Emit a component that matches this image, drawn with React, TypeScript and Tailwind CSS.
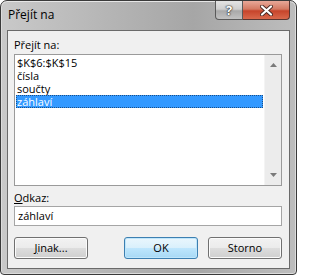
import React from "react";

const font = { fontFamily: "'Open Sans','Noto Sans',sans-serif" };

function Btn({ children, def }: { children: React.ReactNode; def?: boolean }) {
  return (
    <div
      className={
        "w-[74px] h-[22px] rounded-[3px] border flex items-center justify-center text-[11px] text-black " +
        (def
          ? "border-[#3c7fb1] bg-[linear-gradient(#eaf6fd_0%,#d9f0fc_50%,#bee6fd_51%,#a7d9f5_100%)] shadow-[inset_0_0_0_1px_#bfe6fb]"
          : "border-[#707070] bg-[linear-gradient(#f2f2f2_0%,#ebebeb_50%,#dddddd_51%,#cfcfcf_100%)] shadow-[inset_0_0_0_1px_#fbfbfb]")
      }
    >
      {children}
    </div>
  );
}

export default function App() {
  return (
    <div
      style={font}
      className="w-[297px] h-[275px] flex flex-col rounded-t-[7px] rounded-b-[4px] border border-[#3a3a3a] bg-[linear-gradient(90deg,#c9c9c9_0%,#b3b3b3_40%,#a6a6a6_65%,#bdbdbd_100%)] shadow-[inset_0_1px_0_#e6e6e6,inset_1px_0_0_#dcdcdc,inset_-1px_0_0_#dcdcdc,inset_0_-1px_0_#dcdcdc] overflow-hidden"
    >
      <div className="h-[29px] flex items-start justify-between shrink-0">
        <div className="pl-[7px] pt-[6px] text-[12px] leading-[16px] text-black">Přejít na</div>
        <div className="flex mr-[6px]">
          <div className="w-[28px] h-[19px] border border-t-0 border-[#5a5a5a] rounded-bl-[4px] bg-[linear-gradient(#e4e4e4_0%,#cfcfcf_45%,#a9a9a9_55%,#c2c2c2_100%)] flex items-center justify-center text-white font-bold text-[13px] leading-none [text-shadow:0_0_1px_#333,0_0_1px_#333,0_0_2px_#333]">
            ?
          </div>
          <div className="w-[47px] h-[19px] border border-t-0 border-l-0 border-[#5a3530] rounded-br-[4px] bg-[linear-gradient(#e8a898_0%,#d47a63_45%,#c7442b_55%,#d9694c_100%)] flex items-center justify-center">
            <svg width="13" height="11" viewBox="0 0 13 11">
              <path d="M2 1.5 L11 9.5 M11 1.5 L2 9.5" stroke="#4a2a24" strokeWidth="4" strokeLinecap="round" />
              <path d="M2 1.5 L11 9.5 M11 1.5 L2 9.5" stroke="#ffffff" strokeWidth="2.2" strokeLinecap="round" />
            </svg>
          </div>
        </div>
      </div>
      <div className="mx-[6px] mb-[5px] flex-1 border border-[#6a6a6a] bg-[#f0f0f0] flex flex-col pl-[6px] pr-[7px] pt-[6px] text-[11px] text-black">
        <div className="h-[15px] leading-[15px]">Přejít na:</div>
        <div className="mt-[2px] h-[132px] border border-[#9a9a9a] bg-white flex">
          <div className="flex-1 p-[1px] flex flex-col">
            <div className="h-[13px] leading-[13px] pl-[1px]">$K$6:$K$15</div>
            <div className="h-[13px] leading-[13px] pl-[1px]">čísla</div>
            <div className="h-[13px] leading-[13px] pl-[1px]">součty</div>
            <div className="h-[13px] leading-[11px] pl-[0px] bg-[#3399ff] text-white border border-dotted border-[#1c4f86]">záhlaví</div>
          </div>
          <div className="w-[17px] bg-[#ececec] border-l border-[#f4f4f4] flex flex-col items-center justify-between py-[8px]">
            <svg width="7" height="4" viewBox="0 0 7 4">
              <path d="M0 4 L3.5 0 L7 4 Z" fill="#7a7a7a" />
            </svg>
            <svg width="7" height="4" viewBox="0 0 7 4">
              <path d="M0 0 L7 0 L3.5 4 Z" fill="#7a7a7a" />
            </svg>
          </div>
        </div>
        <div className="mt-[4px] h-[15px] leading-[15px]">
          <span className="underline">O</span>dkaz:
        </div>
        <div className="mt-[1px] h-[20px] border border-[#a5a5a5] bg-white leading-[18px] pl-[3px]">záhlaví</div>
        <div className="mt-[11px] flex justify-between">
          <Btn>
            <span className="underline">J</span>inak...
          </Btn>
          <div className="flex gap-[10px]">
            <Btn def>OK</Btn>
            <Btn>Storno</Btn>
          </div>
        </div>
      </div>
    </div>
  );
}
